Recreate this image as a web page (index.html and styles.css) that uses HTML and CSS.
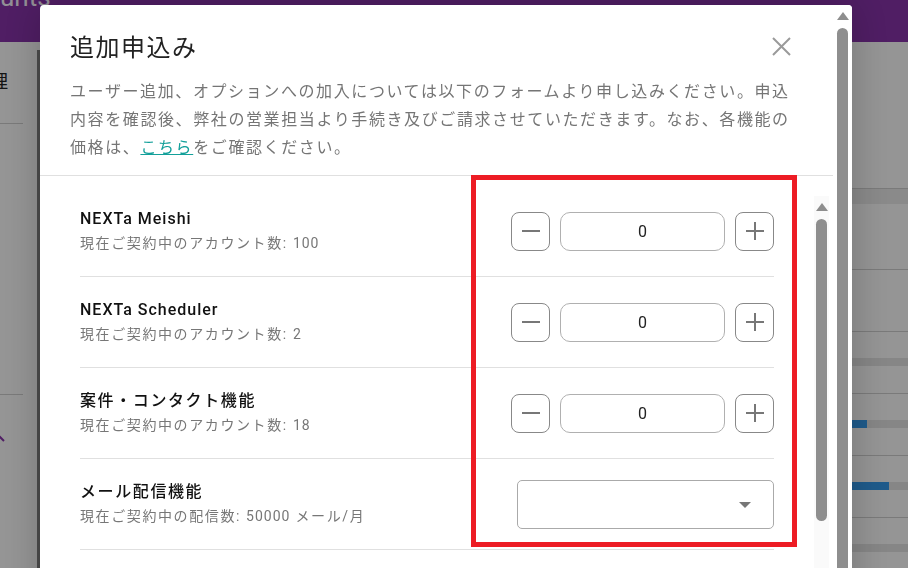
FILE: index.html
```html
<!DOCTYPE html>
<html lang="ja">
<head>
  <meta charset="UTF-8">
  <title>追加申込み</title>
  <link rel="stylesheet" href="styles.css">
</head>
<body>

<div class="page">
  <header class="app-header">
    <span class="app-title">unts</span>
  </header>
  <div class="app-main">
    <aside class="side">
      <div class="side-inner">
        <div class="side-item">管理</div>
        <div class="side-sep"></div>
        <div class="side-space"></div>
        <div class="side-sep"></div>
        <div class="side-chevron">
          <svg width="14" height="10" viewBox="0 0 14 10"><path d="M1 8L7 2L13 8" fill="none" stroke="#8532a7" stroke-width="2"/></svg>
        </div>
      </div>
    </aside>
    <section class="content">
      <div class="t-head"></div>
      <div class="t-row first"></div>
      <div class="t-row"></div>
      <div class="t-row"><div class="cell-name"></div><div class="cell-bar"><div class="bar"></div></div></div>
      <div class="t-row"><div class="cell-name"></div><div class="cell-bar"><div class="bar"><div class="bar-fill" style="width: 67px"></div></div></div></div>
      <div class="t-row"><div class="cell-name"></div><div class="cell-bar"><div class="bar"><div class="bar-fill" style="width: 89px"></div></div></div></div>
      <div class="t-row"><div class="cell-name"></div><div class="cell-bar"><div class="bar"></div></div></div>
    </section>
  </div>
</div>

<div class="modal-bg">
  <div class="dialog">
    <div class="dialog-main">
      <div class="dialog-head">
        <div class="title-row">
          <h2>追加申込み</h2>
          <button class="close" aria-label="閉じる">
            <svg width="24" height="24" viewBox="0 0 24 24"><path d="M2 2L19 19M19 2L2 19" stroke="#9a9a9a" stroke-width="2"/></svg>
          </button>
        </div>
        <p class="lead">ユーザー追加、オプションへの加入については以下のフォームより申し込みください。申込内容を確認後、弊社の営業担当より手続き及びご請求させていただきます。なお、各機能の価格は、<a href="#">こちら</a>をご確認ください。</p>
      </div>

      <div class="dialog-body">
        <div class="rows">
          <div class="row">
            <div class="row-text">
              <div class="row-name latin">NEXTa Meishi</div>
              <div class="row-sub">現在ご契約中のアカウント数: <span class="num">100</span></div>
            </div>
            <div class="stepper">
              <button class="step"><svg width="18" height="18" viewBox="0 0 18 18"><path d="M0 9H18" stroke="#777" stroke-width="2"/></svg></button>
              <input class="qty" type="text" value="0">
              <button class="step"><svg width="18" height="18" viewBox="0 0 18 18"><path d="M0 9H18M9 0V18" stroke="#777" stroke-width="2"/></svg></button>
            </div>
          </div>
          <div class="row">
            <div class="row-text">
              <div class="row-name latin">NEXTa Scheduler</div>
              <div class="row-sub">現在ご契約中のアカウント数: <span class="num">2</span></div>
            </div>
            <div class="stepper">
              <button class="step"><svg width="18" height="18" viewBox="0 0 18 18"><path d="M0 9H18" stroke="#777" stroke-width="2"/></svg></button>
              <input class="qty" type="text" value="0">
              <button class="step"><svg width="18" height="18" viewBox="0 0 18 18"><path d="M0 9H18M9 0V18" stroke="#777" stroke-width="2"/></svg></button>
            </div>
          </div>
          <div class="row">
            <div class="row-text">
              <div class="row-name">案件・コンタクト機能</div>
              <div class="row-sub">現在ご契約中のアカウント数: <span class="num">18</span></div>
            </div>
            <div class="stepper">
              <button class="step"><svg width="18" height="18" viewBox="0 0 18 18"><path d="M0 9H18" stroke="#777" stroke-width="2"/></svg></button>
              <input class="qty" type="text" value="0">
              <button class="step"><svg width="18" height="18" viewBox="0 0 18 18"><path d="M0 9H18M9 0V18" stroke="#777" stroke-width="2"/></svg></button>
            </div>
          </div>
          <div class="row">
            <div class="row-text">
              <div class="row-name">メール配信機能</div>
              <div class="row-sub">現在ご契約中の配信数: <span class="num">50000</span> メール/月</div>
            </div>
            <div class="select-wrap">
              <select class="select"><option></option></select>
            </div>
          </div>
        </div>
        <div class="inner-scroll">
          <span class="sb-arrow"></span>
          <span class="sb-thumb long"></span>
        </div>
      </div>
    </div>
    <div class="outer-scroll">
      <span class="sb-arrow"></span>
      <span class="sb-thumb"></span>
    </div>
  </div>
</div>

<div class="mark"></div>

</body>
</html>
```

FILE: styles.css
```css
body {
  margin: 0;
  width: 908px;
  height: 568px;
  overflow: hidden;
  font-family: Roboto, "Noto Sans CJK JP", sans-serif;
  background: #f8f8f8;
}

/* underlying page */
.page {
  height: 568px;
  display: flex;
  flex-direction: column;
}

.app-header {
  height: 42px;
  flex-shrink: 0;
  background: #8532a7;
  overflow: hidden;
}

.app-title {
  display: block;
  margin-top: -16px;
  font-size: 26px;
  line-height: 26px;
  color: #f4eef8;
}

.app-main {
  flex: 1;
  display: flex;
}

.side {
  width: 40px;
  padding-top: 8px;
  display: flex;
  flex-direction: column;
}

.side-inner {
  flex: 1;
  border-right: 3px solid #808080;
}

.side-item {
  width: 8px;
  margin-top: 17px;
  height: 26px;
  display: flex;
  justify-content: flex-end;
  align-items: center;
  white-space: nowrap;
  overflow: hidden;
  font-size: 18px;
  color: #222;
}

.side-sep {
  width: 23px;
  margin-top: 30px;
  border-top: 1px solid #ccc;
}

.side-space {
  height: 225px;
}

.side-sep + .side-chevron {
  margin-top: 38px;
}

.side-space + .side-sep {
  margin-top: 45px;
}

.side-chevron {
  width: 5px;
  height: 10px;
  display: flex;
  justify-content: flex-end;
  overflow: hidden;
}

.side-chevron svg {
  flex-shrink: 0;
}

.content {
  flex: 1;
  padding-top: 146px;
}

.t-head {
  height: 15px;
  border-top: 1px solid #ccc;
  background: #e6e6e6;
}

.t-row {
  height: 61px;
  border-top: 1px solid #ccc;
  display: flex;
}

.t-row.first {
  height: 65px;
  border-top: none;
}

.cell-name {
  width: 760px;
}

.cell-bar {
  flex: 1;
  padding-top: 26px;
}

.bar {
  height: 8px;
  background: #dfdfdf;
}

.bar-fill {
  height: 8px;
  background: #3498e8;
}

/* modal */
.modal-bg {
  position: fixed;
  top: 0;
  left: 0;
  width: 100%;
  height: 100%;
  background: rgba(0, 0, 0, 0.4);
  padding: 5px 0 0 40px;
  box-sizing: border-box;
}

.dialog {
  width: 812px;
  height: 640px;
  display: flex;
  background: #fff;
  border-radius: 4px 4px 0 0;
  overflow: hidden;
  box-shadow: 0 0 40px rgba(0, 0, 0, 0.22);
  letter-spacing: 0.1em;
}

.dialog-main {
  flex: 1;
  display: flex;
  flex-direction: column;
}

.dialog-head {
  padding: 25px 38px 13px 30px;
}

.title-row {
  display: flex;
  justify-content: space-between;
  align-items: center;
}

.title-row h2 {
  margin: 0;
  font-size: 24px;
  line-height: 36px;
  font-weight: 400;
  letter-spacing: 1.5px;
  color: #222;
}

.close {
  width: 24px;
  height: 24px;
  padding: 0;
  border: none;
  background: none;
  cursor: pointer;
}

.close svg {
  display: block;
}

.lead {
  margin: 12px 0 0;
  font-size: 16px;
  line-height: 28px;
  color: #757575;
}

.lead a {
  color: #13a09a;
  text-decoration: underline;
}

.dialog-body {
  flex: 1;
  display: flex;
  border-top: 1px solid #e0e0e0;
}

.rows {
  flex: 1;
  padding: 10px 40px 0;
}

.row {
  height: 91px;
  box-sizing: border-box;
  display: flex;
  align-items: center;
  justify-content: space-between;
  border-bottom: 1px solid #e0e0e0;
}

.row-name {
  font-size: 16px;
  line-height: 24px;
  font-weight: 500;
  color: #111;
}

.row-name.latin {
  letter-spacing: 1px;
}

.row-sub {
  font-size: 14px;
  line-height: 24px;
  color: #777;
}

.row-sub .num {
  letter-spacing: 1px;
}

.stepper {
  display: flex;
  gap: 10px;
}

.step {
  width: 39px;
  height: 39px;
  padding: 0;
  border: 1px solid #888;
  border-radius: 8px;
  background: #fff;
  display: flex;
  justify-content: center;
  align-items: center;
  cursor: pointer;
}

.qty {
  width: 165px;
  height: 39px;
  box-sizing: border-box;
  border: 1px solid #b0b0b0;
  border-radius: 10px;
  text-align: center;
  font-family: Roboto, sans-serif;
  font-size: 16px;
  color: #222;
  letter-spacing: 0;
}

.select-wrap {
  position: relative;
}

.select {
  width: 257px;
  height: 49px;
  border: 1px solid #aaa;
  border-radius: 5px;
  background: #fff;
  appearance: none;
}

.select-wrap::after {
  content: "";
  position: absolute;
  right: 23px;
  top: 22px;
  border-left: 6px solid transparent;
  border-right: 6px solid transparent;
  border-top: 6px solid #777;
}

/* scrollbars */
.inner-scroll {
  width: 15px;
  margin: 20px 4px 0 0;
  background: #fafafa;
  display: flex;
  flex-direction: column;
  align-items: center;
}

.outer-scroll {
  width: 19px;
  background: #fff;
  display: flex;
  flex-direction: column;
  align-items: center;
}

.sb-arrow {
  margin-top: 7px;
  border-left: 6px solid transparent;
  border-right: 6px solid transparent;
  border-bottom: 8px solid #8e8e8e;
}

.sb-thumb {
  width: 11px;
  height: 600px;
  margin-top: 8px;
  border-radius: 6px;
  background: #8e8e8e;
}

.sb-thumb.long {
  height: 302px;
}

/* annotation */
.mark {
  position: absolute;
  left: 471px;
  top: 175px;
  width: 326px;
  height: 372px;
  box-sizing: border-box;
  border: 5px solid #ed1c24;
}
```
